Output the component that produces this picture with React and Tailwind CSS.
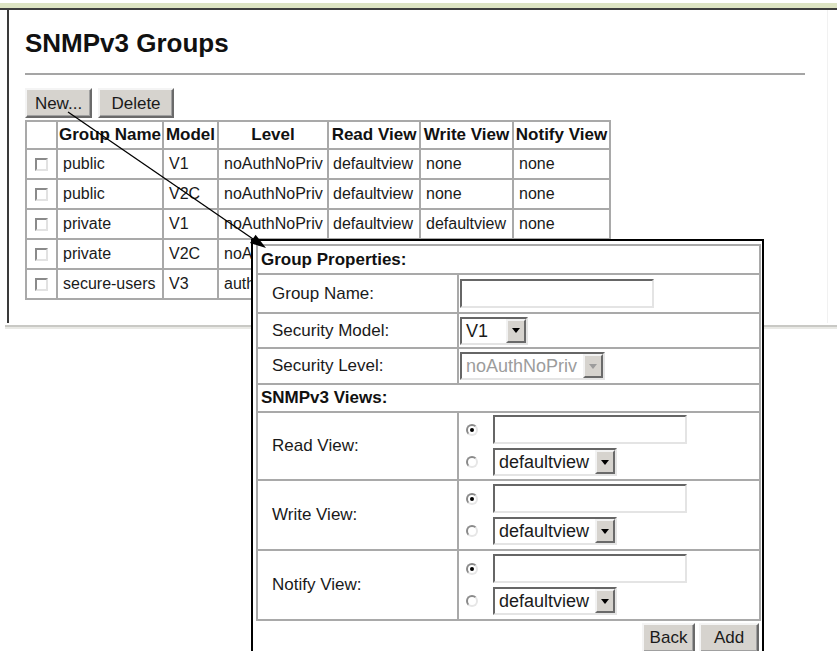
import React from 'react';

const groups = [
  { name: 'public', model: 'V1', level: 'noAuthNoPriv', read: 'defaultview', write: 'none', notify: 'none' },
  { name: 'public', model: 'V2C', level: 'noAuthNoPriv', read: 'defaultview', write: 'none', notify: 'none' },
  { name: 'private', model: 'V1', level: 'noAuthNoPriv', read: 'defaultview', write: 'defaultview', notify: 'none' },
  { name: 'private', model: 'V2C', level: 'noAuthNoPriv', read: 'defaultview', write: 'defaultview', notify: 'none' },
  { name: 'secure-users', model: 'V3', level: 'authPriv', read: 'defaultview', write: 'defaultview', notify: 'defaultview' },
];

// classic raised button
function Btn({ children, className = '' }) {
  return (
    <button
      type="button"
      className={`h-[30px] bg-[#d6d3ce] text-[17px] text-[#1a1a1a] leading-none border-2 border-t-[#f4f4f4] border-l-[#f4f4f4] border-b-[#6a6a6a] border-r-[#6a6a6a] shadow-[inset_-1px_-1px_0_#a0a0a0] ${className}`}
    >
      {children}
    </button>
  );
}

function Checkbox() {
  return (
    <span className="inline-block w-[13px] h-[13px] bg-white border-2 border-t-[#8a8a8a] border-l-[#8a8a8a] border-b-[#e2e2e2] border-r-[#e2e2e2]" />
  );
}

function Radio({ on }) {
  return (
    <span className="relative inline-block w-[12px] h-[12px] shrink-0 rounded-full bg-white border-2 border-t-[#8a8a8a] border-l-[#8a8a8a] border-b-[#e6e6e6] border-r-[#e6e6e6]">
      {on && <span className="absolute left-[2px] top-[2px] w-[4px] h-[4px] rounded-full bg-black" />}
    </span>
  );
}

function TextBox({ className = '' }) {
  return (
    <input
      type="text"
      readOnly
      className={`w-[194px] h-[29px] bg-white outline-none border-2 border-t-[#666] border-l-[#666] border-b-[#e4e4e4] border-r-[#e4e4e4] ${className}`}
    />
  );
}

function Select({ value, className = '', disabled }) {
  return (
    <div
      className={`flex items-stretch h-[28px] bg-white border-2 border-t-[#666] border-l-[#666] border-b-[#e4e4e4] border-r-[#e4e4e4] ${className}`}
    >
      <span className={`flex-1 flex items-center pl-[4px] text-[18px] leading-none ${disabled ? 'text-[#9c9c9c]' : 'text-[#1a1a1a]'}`}>
        {value}
      </span>
      <span className="w-[20px] flex items-center justify-center bg-[#d6d3ce] border-2 border-t-[#f2f2f2] border-l-[#f2f2f2] border-b-[#6a6a6a] border-r-[#6a6a6a]">
        <svg width="8" height="5" viewBox="0 0 8 5">
          <path d="M0 0h8L4 5z" fill={disabled ? '#9c9c9c' : '#000'} />
        </svg>
      </span>
    </div>
  );
}

function ViewCell() {
  return (
    <td className="border-2 border-[#a9a9a9] pl-[7px]">
      <div className="flex flex-col gap-[4px]">
        <div className="flex items-center gap-[15px]">
          <Radio on />
          <TextBox className="h-[28px]" />
        </div>
        <div className="flex items-center gap-[15px]">
          <Radio />
          <Select value="defaultview" className="w-[124px]" />
        </div>
      </div>
    </td>
  );
}

export default function App() {
  return (
    <div className="relative w-[837px] h-[651px] overflow-hidden bg-white font-['Liberation_Sans',Arial,sans-serif] text-[#1a1a1a]">
      <div className="h-[3px] bg-white" />
      <div className="h-[5px] bg-[#dde4c3]" />
      <div className="h-[2px] bg-[#3e3e3e]" />

      <div className="ml-[7px] mr-[9px] h-[313px] border-l-2 border-[#3a3a3a] border-r border-r-[#f1f1f1] pl-[16px] pt-[18px]">
        <h1 className="text-[26px] leading-[30px] font-bold text-[#111]">SNMPv3 Groups</h1>
        <div className="mt-[15px] w-[780px] h-[2px] bg-[#a5a5a5]" />

        <div className="mt-[13px] flex gap-[6px]">
          <Btn className="w-[67px]">New...</Btn>
          <Btn className="w-[76px]">Delete</Btn>
        </div>

        <table className="mt-[2px] w-[584px] table-fixed border-collapse border-2 border-[#a9a9a9]">
          <colgroup>
            <col className="w-[31px]" />
            <col className="w-[106px]" />
            <col className="w-[55px]" />
            <col className="w-[110px]" />
            <col className="w-[92px]" />
            <col className="w-[93px]" />
            <col className="w-[97px]" />
          </colgroup>
          <thead>
            <tr className="h-[28px] text-[17px] font-bold text-[#111]">
              <th className="border-2 border-[#a9a9a9]" />
              <th className="border-2 border-[#a9a9a9] whitespace-nowrap">Group Name</th>
              <th className="border-2 border-[#a9a9a9] whitespace-nowrap">Model</th>
              <th className="border-2 border-[#a9a9a9] whitespace-nowrap">Level</th>
              <th className="border-2 border-[#a9a9a9] whitespace-nowrap">Read View</th>
              <th className="border-2 border-[#a9a9a9] whitespace-nowrap">Write View</th>
              <th className="border-2 border-[#a9a9a9] whitespace-nowrap">Notify View</th>
            </tr>
          </thead>
          <tbody>
            {groups.map((g, i) => (
              <tr key={i} className="h-[30px] text-[16px]">
                <td className="border-2 border-[#a9a9a9] text-center">
                  <div className="flex justify-center"><Checkbox /></div>
                </td>
                <td className="border-2 border-[#a9a9a9] px-[5px] whitespace-nowrap">{g.name}</td>
                <td className="border-2 border-[#a9a9a9] px-[5px] whitespace-nowrap">{g.model}</td>
                <td className="border-2 border-[#a9a9a9] px-[5px] whitespace-nowrap">{g.level}</td>
                <td className="border-2 border-[#a9a9a9] px-[4px] whitespace-nowrap">{g.read}</td>
                <td className="border-2 border-[#a9a9a9] px-[5px] whitespace-nowrap">{g.write}</td>
                <td className="border-2 border-[#a9a9a9] px-[5px] whitespace-nowrap">{g.notify}</td>
              </tr>
            ))}
          </tbody>
        </table>
      </div>

      <div className="mt-[2px] ml-[5px] h-[4px] border-t-2 border-[#c9c9c5] border-b-2 border-b-[#e9e9e5]" />

      {/* new group dialog */}
      <div className="absolute left-[251px] top-[239px] w-[513px] h-[440px] border-2 border-black bg-white p-[3px] z-10">
        <table className="w-[503px] table-fixed border-collapse border-2 border-[#a9a9a9] text-[17px]">
          <colgroup>
            <col className="w-[201px]" />
            <col className="w-[302px]" />
          </colgroup>
          <tbody>
            <tr className="h-[29px]">
              <td colSpan={2} className="border-2 border-[#a9a9a9] pl-[3px] font-bold text-[#111]">Group Properties:</td>
            </tr>
            <tr className="h-[39px]">
              <td className="border-2 border-[#a9a9a9] pl-[14px]">Group Name:</td>
              <td className="border-2 border-[#a9a9a9] pl-[1px]"><TextBox /></td>
            </tr>
            <tr className="h-[35px]">
              <td className="border-2 border-[#a9a9a9] pl-[14px]">Security Model:</td>
              <td className="border-2 border-[#a9a9a9] pl-[1px]"><Select value="V1" className="w-[68px]" /></td>
            </tr>
            <tr className="h-[36px]">
              <td className="border-2 border-[#a9a9a9] pl-[14px]">Security Level:</td>
              <td className="border-2 border-[#a9a9a9] pl-[1px]"><Select value="noAuthNoPriv" className="w-[145px]" disabled /></td>
            </tr>
            <tr className="h-[27px]">
              <td colSpan={2} className="border-2 border-[#a9a9a9] pl-[3px] font-bold text-[#111]">SNMPv3 Views:</td>
            </tr>
            <tr className="h-[68px]">
              <td className="border-2 border-[#a9a9a9] pl-[14px]">Read View:</td>
              <ViewCell />
            </tr>
            <tr className="h-[70px]">
              <td className="border-2 border-[#a9a9a9] pl-[14px]">Write View:</td>
              <ViewCell />
            </tr>
            <tr className="h-[70px]">
              <td className="border-2 border-[#a9a9a9] pl-[14px]">Notify View:</td>
              <ViewCell />
            </tr>
          </tbody>
        </table>
        <div className="mt-[2px] flex justify-end gap-[4px] w-[503px]">
          <Btn className="w-[53px] h-[29px]">Back</Btn>
          <Btn className="w-[60px] h-[29px]">Add</Btn>
        </div>
      </div>

      {/* callout from the New... button to the dialog */}
      <svg className="absolute left-0 top-0 z-20 pointer-events-none" width="837" height="651">
        <line x1="68" y1="112" x2="256" y2="241" stroke="#000" strokeWidth="1.3" />
        <polygon points="266,248 250,243 255.6,234.8" fill="#000" />
      </svg>
    </div>
  );
}
